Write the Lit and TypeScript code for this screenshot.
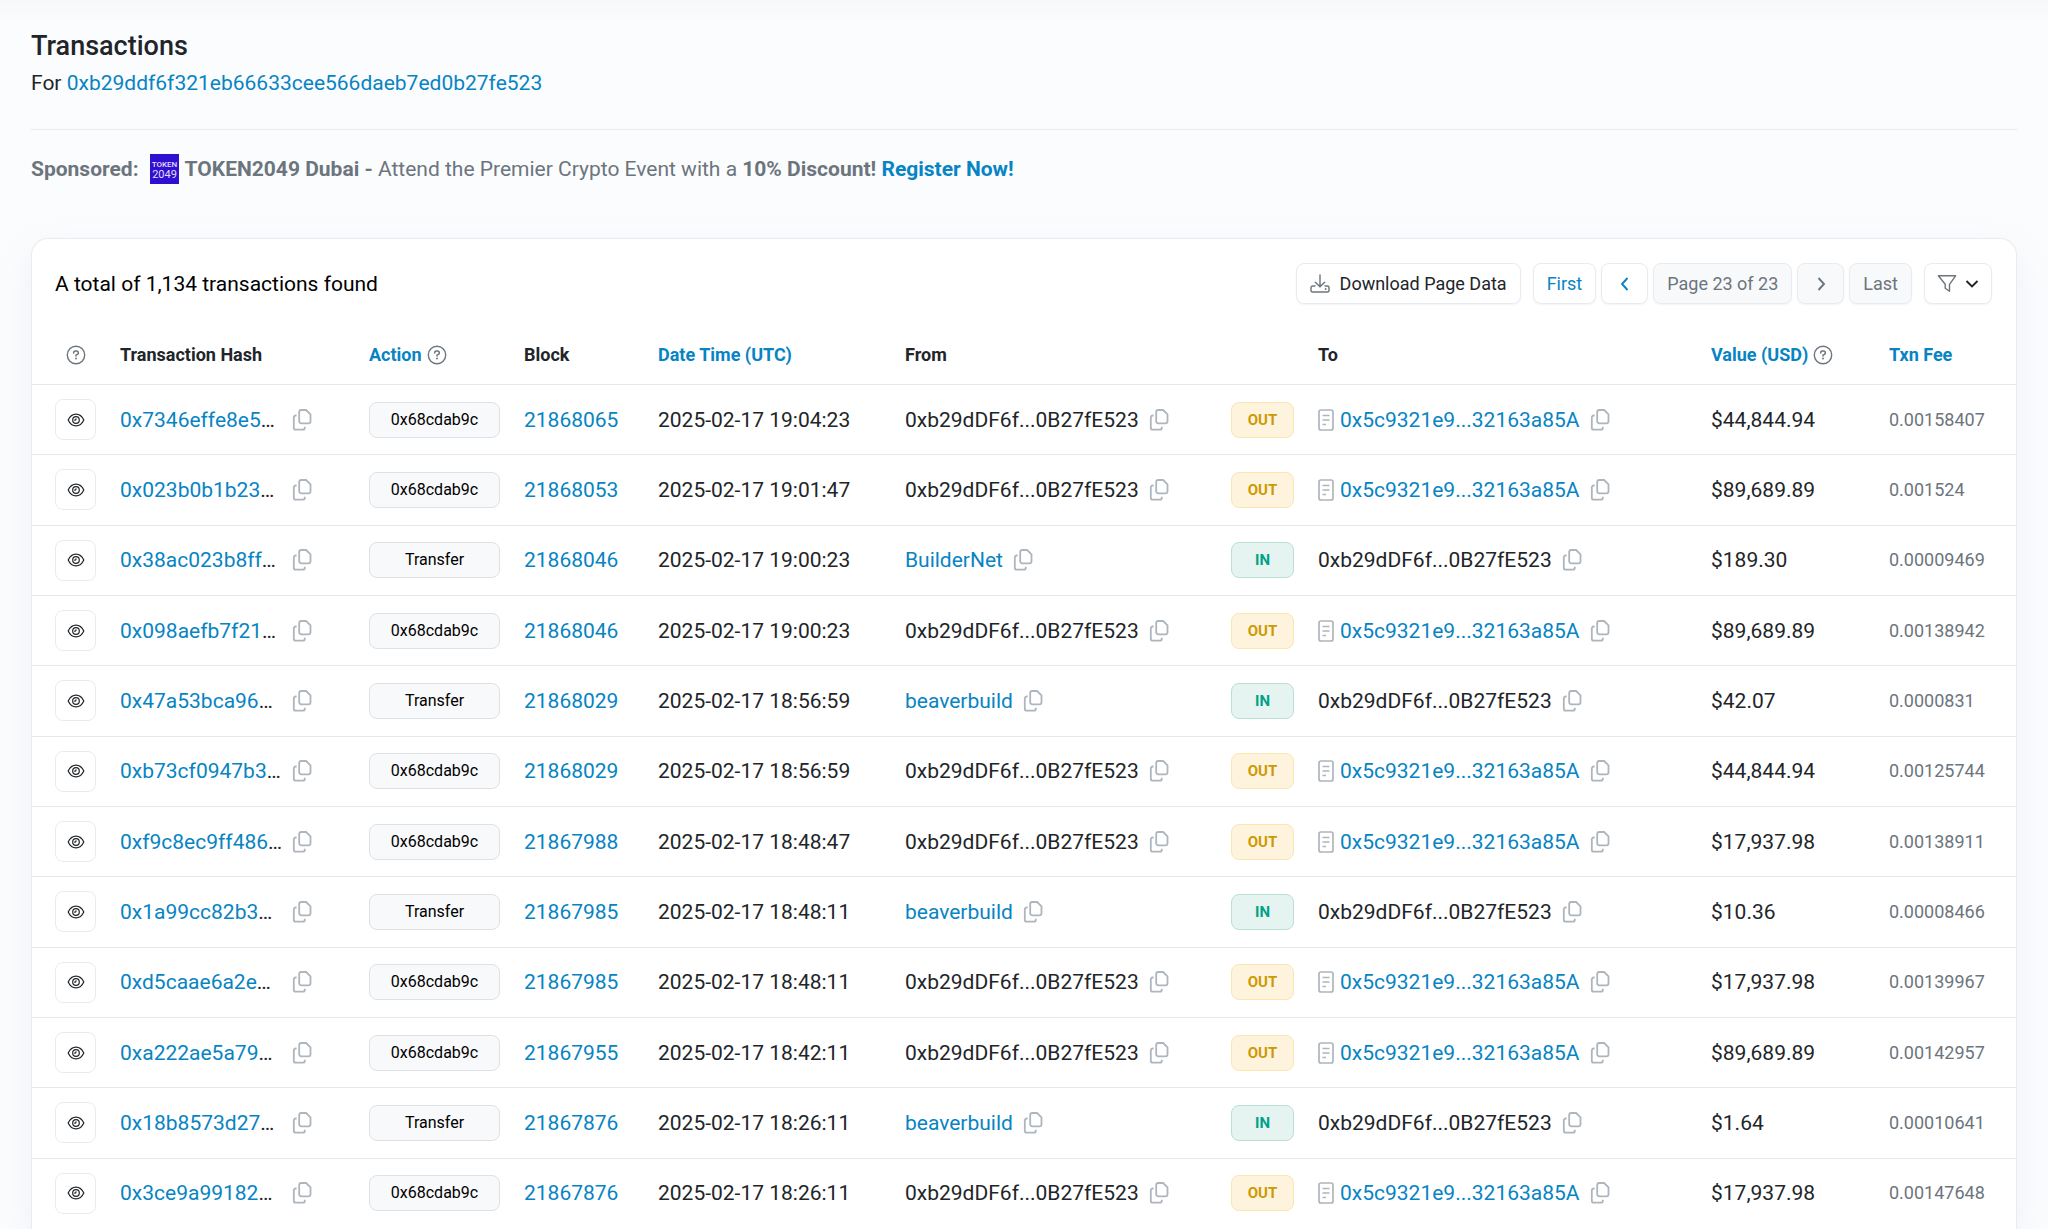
import { LitElement, html, css, svg, nothing } from "lit";
import { customElement, property } from "lit/decorators.js";

interface Tx {
  hash: string;
  action: string;
  block: string;
  time: string;
  from: string;
  value: string;
  fee: string;
}

const OWN = "0xb29dDF6f...0B27fE523";
const CONTRACT = "0x5c9321e9...32163a85A";
const CALL = "0x68cdab9c";

const tx = (
  hash: string, action: string, block: string, time: string,
  from: string, value: string, fee: string
): Tx => ({ hash, action, block, time: `2025-02-17 ${time}`, from, value, fee });

const TXS: Tx[] = [
  tx("0x7346effe8e5", CALL, "21868065", "19:04:23", OWN, "$44,844.94", "0.00158407"),
  tx("0x023b0b1b23", CALL, "21868053", "19:01:47", OWN, "$89,689.89", "0.001524"),
  tx("0x38ac023b8ff", "Transfer", "21868046", "19:00:23", "BuilderNet", "$189.30", "0.00009469"),
  tx("0x098aefb7f21", CALL, "21868046", "19:00:23", OWN, "$89,689.89", "0.00138942"),
  tx("0x47a53bca96", "Transfer", "21868029", "18:56:59", "beaverbuild", "$42.07", "0.0000831"),
  tx("0xb73cf0947b3", CALL, "21868029", "18:56:59", OWN, "$44,844.94", "0.00125744"),
  tx("0xf9c8ec9ff486", CALL, "21867988", "18:48:47", OWN, "$17,937.98", "0.00138911"),
  tx("0x1a99cc82b3", "Transfer", "21867985", "18:48:11", "beaverbuild", "$10.36", "0.00008466"),
  tx("0xd5caae6a2e", CALL, "21867985", "18:48:11", OWN, "$17,937.98", "0.00139967"),
  tx("0xa222ae5a79", CALL, "21867955", "18:42:11", OWN, "$89,689.89", "0.00142957"),
  tx("0x18b8573d27", "Transfer", "21867876", "18:26:11", "beaverbuild", "$1.64", "0.00010641"),
  tx("0x3ce9a99182", CALL, "21867876", "18:26:11", OWN, "$17,937.98", "0.00147648"),
];

const shapes = {
  help: svg`<circle cx="10" cy="10" r="8.7" stroke-width="1.4"/>
    <path d="M7.7 8V7.8c0-1 .8-1.7 1.8-1.7h1c1 0 1.8.8 1.8 1.8 0 .7-.4 1.2-.9 1.5L10 10.200v.7" stroke-width="1.5" stroke-linecap="round"/>
    <circle cx="10" cy="13.500" r=".95" fill="currentColor" stroke="none"/>`,
  copy: svg`<path d="M9.300 1h4.800l4.400 4.300v6.900c0 1.200-.9 2.100-2.100 2.100H9.300c-1.200 0-2.100-.9-2.100-2.100V3.100c0-1.200.9-2.100 2.100-2.100z" stroke-width="1.8"/>
    <path d="M4.600 6.500H3.700c-1.100 0-1.900.8-1.900 1.900v10.300c0 1.200.8 2 1.900 2h7.200c1.200 0 1.900-.8 1.900-2v-1" stroke-width="1.800"/>`,
  eye: svg`<path d="M1.200 9C2.800 5.500 5.700 3.100 9 3.100S15.200 5.500 16.800 9C15.200 12.500 12.300 14.900 9 14.900S2.800 12.500 1.200 9z" stroke-width="1.200"/>
    <circle cx="9" cy="9" r="3.300" stroke-width="1.200"/>
    <path d="M9 7.300c.2 1.300-.5 1.900-1.800 1.800" stroke-width="1.200"/>`,
  doc: svg`<rect x="1" y="1" width="14" height="20" rx="2" stroke-width="1.700"/>
    <path d="M4.500 6.500h7M4.500 11h7M4.500 15.500h3.500" stroke-width="1.600"/>`,
  download: svg`<path d="M10 1v11.500M5.300 8.200L10 12.800l4.700-4.600" stroke-width="1.400" stroke-linecap="round"/>
    <path d="M5 12H2.800C1.800 12 1 12.800 1 13.800v2.400C1 17.200 1.800 18 2.800 18h14.400c1 0 1.800-.8 1.800-1.800v-2.400c0-1-.8-1.800-1.800-1.800H15" stroke-width="1.400" stroke-linecap="round"/>
    <circle cx="15.700" cy="15" r=".9" fill="currentColor" stroke="none"/>`,
  left: svg`<path d="M11.500 3L6 9l5.500 6" stroke-width="1.900"/>`,
  right: svg`<path d="M6.500 3L12 9l-5.500 6" stroke-width="1.900"/>`,
  down: svg`<path d="M1.500 4l5.500 5.500L12.500 4" stroke-width="1.900"/>`,
  filter: svg`<path d="M1.400 1.800h17.200l-6.100 8.500v7L8.200 14.300v-4z" stroke-width="1.400" stroke-linejoin="round"/>`,
};
type IconName = keyof typeof shapes;

const boxes: Record<IconName, [number, number]> = {
  help: [20, 20], copy: [20, 22], eye: [18, 18], doc: [16, 22], download: [20, 19],
  left: [18, 18], right: [18, 18], down: [14, 14], filter: [20, 19],
};

@customElement("tx-icon")
export class TxIcon extends LitElement {
  static styles = css`
    :host { display: inline-flex; flex: none; }
    svg { display: block; fill: none; stroke: currentColor; }
  `;

  @property() name: IconName = "help";

  render() {
    const [w, h] = boxes[this.name];
    return html`<svg width=${w} height=${h} viewBox="0 0 ${w} ${h}" aria-hidden="true">${shapes[this.name]}</svg>`;
  }
}

@customElement("app-root")
export class AppRoot extends LitElement {
  static styles = css`
    :host {
      display: block;
      font-family: Roboto, "Liberation Sans", sans-serif;
      font-size: 21px;
      line-height: 30px;
      color: #212529;
    }
    * { box-sizing: border-box; }
    a { color: #0784c3; text-decoration: none; }
    button { font: inherit; color: inherit; margin: 0; cursor: pointer; }
    button:disabled { cursor: default; }

    .page {
      display: flex;
      flex-direction: column;
      min-height: 100vh;
      padding: 29px 31px 0;
      background: linear-gradient(#f7f8fa, #fbfcfe 24px);
    }
    .title { margin: 0; font-size: 27px; line-height: 34px; font-weight: 500; }
    .subtitle { margin: 5px 0 0; }
    .sponsor {
      display: flex;
      align-items: center;
      margin: 31px 0 54px;
      padding-top: 24px;
      border-top: 1px solid #e9ecef;
      color: #6c757d;
      white-space: pre;
    }
    .sponsor b { font-weight: 700; }
    .logo { display: block; margin: 0 6px 0 11px; }
    .logo text { font: 500 8px Roboto, sans-serif; fill: #e4dcff; text-anchor: middle; }
    .logo .year { font-size: 11px; font-weight: 400; }

    .card {
      flex: 1;
      display: flex;
      flex-direction: column;
      background: #fff;
      border: 1px solid #e9ecef;
      border-bottom: 0;
      border-radius: 17px 17px 0 0;
      box-shadow: 0 12px 32px rgba(189, 197, 209, 0.2);
    }
    .toolbar {
      display: flex;
      align-items: center;
      justify-content: space-between;
      padding: 24px 24px 0 23px;
    }
    .total { margin: 0; color: #000; }
    .tools, .pager { display: flex; align-items: center; }
    .tools { gap: 12px; font-size: 18px; }
    .pager { gap: 5px; }
    .btn {
      display: inline-flex;
      align-items: center;
      justify-content: center;
      height: 41px;
      padding: 0 13px;
      background: #fff;
      border: 1px solid #e9ecef;
      border-radius: 8px;
      box-shadow: 0 1px 2px rgba(189, 197, 209, 0.2);
      white-space: nowrap;
    }
    .btn.download { gap: 10px; }
    .btn.step { width: 47px; padding: 0; }
    .btn.link { color: #0784c3; }
    .btn.off { background: #f8f9fa; color: #6c757d; }
    .btn.filter { gap: 8px; padding: 0 12px; }
    .grey { color: #6c757d; }

    .grid {
      flex: 1;
      width: 100%;
      table-layout: fixed;
      border-collapse: separate;
      border-spacing: 0;
    }
    .c-view { width: 76px; }
    .c-hash { width: 249px; }
    .c-action { width: 155px; }
    .c-block { width: 134px; }
    .c-time { width: 247px; }
    .c-from { width: 326px; }
    .c-dir { width: 87px; }
    .c-to { width: 393px; }
    .c-value { width: 178px; }
    .c-fee { width: 139px; }

    th {
      height: 81px;
      padding: 22px 12px 0;
      border-bottom: 1px solid #e5e8eb;
      font-size: 18px;
      font-weight: 700;
      text-align: left;
      white-space: nowrap;
    }
    td {
      height: 70px;
      padding: 0 12px;
      border-bottom: 1px solid #e5e8eb;
      white-space: nowrap;
    }
    tr:last-child td { border-bottom-color: transparent; }
    th:first-child, td:first-child { padding-left: 23px; padding-right: 0; }
    td:last-child { color: #6c757d; font-size: 18px; }
    .head { display: flex; align-items: center; gap: 5px; }
    .head.mid { width: 41px; justify-content: center; }
    .line { display: flex; align-items: center; }
    .hash { width: 172px; }
    .icon-btn {
      display: inline-flex;
      padding: 0;
      border: 0;
      background: none;
      color: #adb5bd;
    }
    .help { color: #6c757d; }
    .copy { margin-left: 10px; }
    .hash + .copy { margin-left: 0; }
    .doc { display: inline-flex; margin-right: 6px; color: #adb5bd; }
    .view {
      display: flex;
      align-items: center;
      justify-content: center;
      width: 41px;
      height: 41px;
      padding: 0;
      background: #fff;
      border: 1px solid #e9ecef;
      border-radius: 8px;
      color: #212529;
    }
    .pill {
      display: flex;
      align-items: center;
      justify-content: center;
      height: 36px;
      border: 1px solid #dee2e6;
      border-radius: 8px;
      background: #f8f9fa;
      color: #000;
      font-size: 16px;
    }
    .dir { font-size: 15px; font-weight: 700; }
    .dir.out { background: #fef4de; border-color: #fbe5b0; color: #cc9a06; }
    .dir.in { background: #e6f4f1; border-color: #b9dfd7; color: #00a186; }
  `;

  private copyButton(label: string) {
    return html`<button class="icon-btn copy" type="button" aria-label="Copy ${label}"><tx-icon name="copy"></tx-icon></button>`;
  }

  private helpButton(label: string) {
    return html`<button class="icon-btn help" type="button" aria-label=${label}><tx-icon name="help"></tx-icon></button>`;
  }

  private party(name: string, contract = false) {
    return html`<div class="line">
      ${contract ? html`<span class="doc"><tx-icon name="doc"></tx-icon></span>` : nothing}
      ${name === OWN ? html`<span>${name}</span>` : html`<a href="#${name}">${name}</a>`}
      ${this.copyButton("address")}
    </div>`;
  }

  private row(t: Tx) {
    const out = t.from === OWN;
    return html`<tr>
      <td><button class="view" type="button" aria-label="Preview transaction"><tx-icon name="eye"></tx-icon></button></td>
      <td><div class="line"><span class="hash"><a href="#${t.hash}">${t.hash}</a>…</span>${this.copyButton("hash")}</div></td>
      <td><span class="pill">${t.action}</span></td>
      <td><a href="#${t.block}">${t.block}</a></td>
      <td>${t.time}</td>
      <td>${this.party(t.from)}</td>
      <td><span class="pill dir ${out ? "out" : "in"}">${out ? "OUT" : "IN"}</span></td>
      <td>${this.party(out ? CONTRACT : OWN, out)}</td>
      <td>${t.value}</td>
      <td>${t.fee}</td>
    </tr>`;
  }

  render() {
    return html`<main class="page">
      <h1 class="title">Transactions</h1>
      <p class="subtitle">For <a href="#address">0xb29ddf6f321eb66633cee566daeb7ed0b27fe523</a></p>
      <div class="sponsor"><b>Sponsored:</b><svg class="logo" width="29" height="30" viewBox="0 0 29 30" aria-hidden="true"><rect width="29" height="30" fill="#2f10d0"/><text x="14.500" y="13">TOKEN</text><text class="year" x="14.500" y="24">2049</text></svg><span><b>TOKEN2049 Dubai -</b> Attend the Premier Crypto Event with a <b>10% Discount!</b> <a href="#register"><b>Register Now!</b></a></span></div>
      <section class="card">
        <div class="toolbar">
          <p class="total">A total of 1,134 transactions found</p>
          <div class="tools">
            <button class="btn download" type="button"><tx-icon class="grey" name="download"></tx-icon>Download Page Data</button>
            <nav class="pager" aria-label="Pages">
              <button class="btn link" type="button">First</button>
              <button class="btn step link" type="button" aria-label="Previous"><tx-icon name="left"></tx-icon></button>
              <span class="btn off">Page 23 of 23</span>
              <button class="btn step off" type="button" aria-label="Next" disabled><tx-icon name="right"></tx-icon></button>
              <button class="btn off" type="button" disabled>Last</button>
            </nav>
            <button class="btn filter" type="button" aria-label="Filter"><tx-icon class="grey" name="filter"></tx-icon><tx-icon name="down"></tx-icon></button>
          </div>
        </div>
        <table class="grid">
          <colgroup>
            <col class="c-view"><col class="c-hash"><col class="c-action"><col class="c-block"><col class="c-time">
            <col class="c-from"><col class="c-dir"><col class="c-to"><col class="c-value"><col class="c-fee">
          </colgroup>
          <thead>
            <tr>
              <th><span class="head mid">${this.helpButton("About preview")}</span></th>
              <th>Transaction Hash</th>
              <th><span class="head"><a href="#action">Action</a>${this.helpButton("About action")}</span></th>
              <th>Block</th>
              <th><a href="#time">Date Time (UTC)</a></th>
              <th>From</th>
              <th></th>
              <th>To</th>
              <th><span class="head"><a href="#value">Value (USD)</a>${this.helpButton("About value")}</span></th>
              <th><a href="#fee">Txn Fee</a></th>
            </tr>
          </thead>
          <tbody>${TXS.map((t) => this.row(t))}</tbody>
        </table>
      </section>
    </main>`;
  }
}
